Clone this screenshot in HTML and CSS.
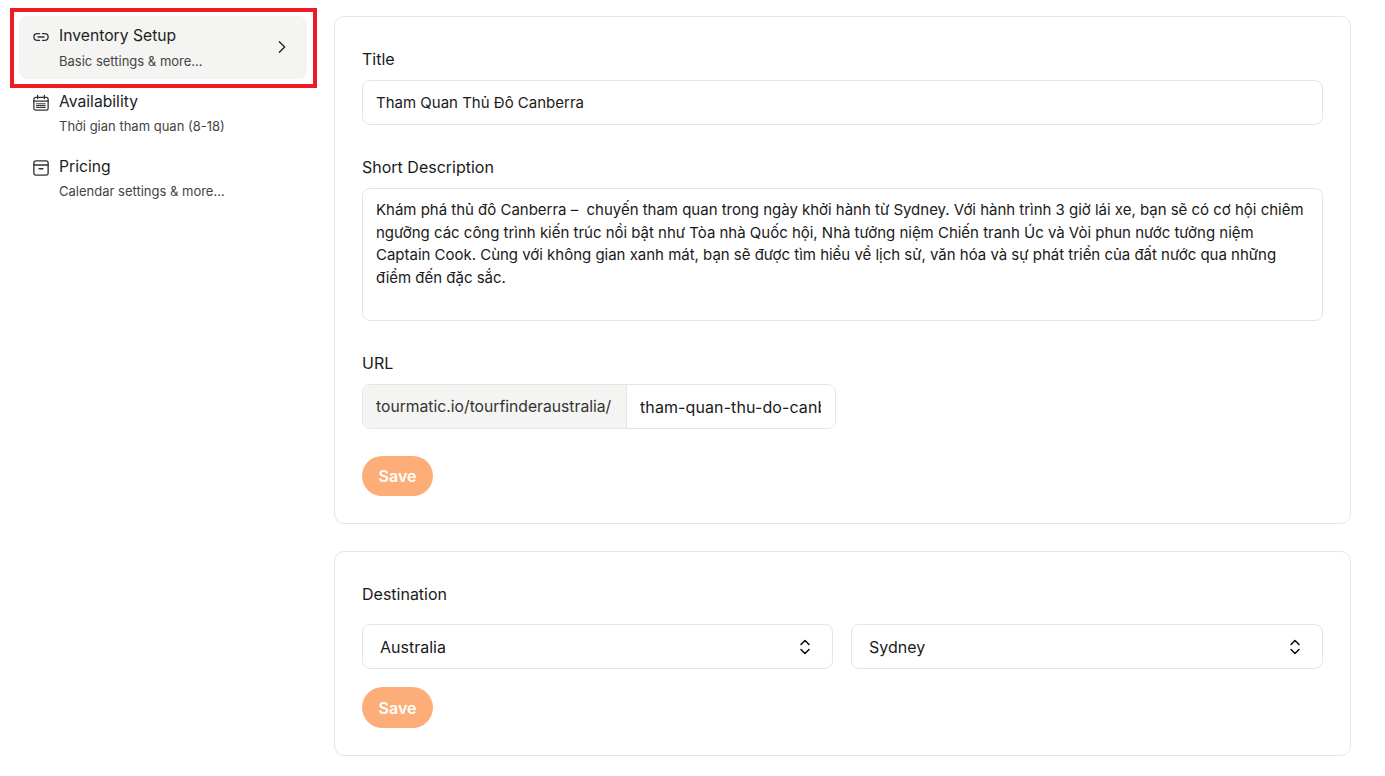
FILE: index.html
```html
<!DOCTYPE html>
<html lang="en">
<head>
    <meta charset="UTF-8">
    <meta name="viewport" content="width=device-width, initial-scale=1.0">
    <title>Inventory Setup</title>
    <link rel="stylesheet" href="styles.css">
</head>
<body>
    <div class="page">
        <!-- Sidebar -->
        <aside class="sidebar">
            <a href="#" class="side-item active">
                <svg class="side-icon" viewBox="0 0 24 24" fill="none" stroke="#333" stroke-width="1.8" stroke-linecap="round">
                    <path d="M10 7.5H7a4.5 4.5 0 0 0 0 9h3"/>
                    <path d="M14 7.5h3a4.5 4.5 0 0 1 0 9h-3"/>
                    <path d="M8 12h8"/>
                </svg>
                <div class="side-text">
                    <div class="side-title">Inventory Setup</div>
                    <div class="side-sub">Basic settings &amp; more...</div>
                </div>
                <svg class="side-arrow" viewBox="0 0 24 24" fill="none" stroke="#222" stroke-width="2" stroke-linecap="round" stroke-linejoin="round">
                    <path d="M8 4l8 8-8 8"/>
                </svg>
            </a>
            <a href="#" class="side-item">
                <svg class="side-icon" viewBox="0 0 24 24" fill="none" stroke="#333" stroke-width="1.7" stroke-linecap="round">
                    <rect x="2.5" y="4.5" width="19" height="17" rx="2.5"/>
                    <path d="M2.5 9.5h19"/>
                    <path d="M7.5 2v4M16.5 2v4"/>
                    <path d="M6 13h12M6 15.5h12M6 18h12" stroke-width="1.5" stroke-dasharray="1.5 1"/>
                </svg>
                <div class="side-text">
                    <div class="side-title">Availability</div>
                    <div class="side-sub">Thời gian tham quan (8-18)</div>
                </div>
            </a>
            <a href="#" class="side-item">
                <svg class="side-icon" viewBox="0 0 24 24" fill="none" stroke="#333" stroke-width="1.8" stroke-linecap="round" stroke-linejoin="round">
                    <path d="M5 2.5h14a2.5 2.5 0 0 1 2.5 2.5v14a2.5 2.5 0 0 1-2.5 2.5H5A2.5 2.5 0 0 1 2.5 19V5A2.5 2.5 0 0 1 5 2.5z"/>
                    <path d="M2.5 8h19"/>
                    <path d="M9.5 13h5"/>
                </svg>
                <div class="side-text">
                    <div class="side-title">Pricing</div>
                    <div class="side-sub">Calendar settings &amp; more...</div>
                </div>
            </a>
        </aside>

        <!-- Main forms -->
        <main class="content">
            <section class="card">
                <label class="field-label">Title</label>
                <input type="text" class="text-input" value="Tham Quan Thủ Đô Canberra">

                <label class="field-label label-gap">Short Description</label>
                <textarea class="text-area">Khám phá thủ đô Canberra –  chuyến tham quan trong ngày khởi hành từ Sydney. Với hành trình 3 giờ lái xe, bạn sẽ có cơ hội chiêm
ngưỡng các công trình kiến trúc nổi bật như Tòa nhà Quốc hội, Nhà tưởng niệm Chiến tranh Úc và Vòi phun nước tưởng niệm
Captain Cook. Cùng với không gian xanh mát, bạn sẽ được tìm hiểu về lịch sử, văn hóa và sự phát triển của đất nước qua những
điểm đến đặc sắc.</textarea>

                <label class="field-label label-gap">URL</label>
                <div class="url-group">
                    <span class="url-prefix">tourmatic.io/tourfinderaustralia/</span>
                    <input type="text" class="url-input" value="tham-quan-thu-do-canberra">
                </div>

                <button class="save-btn save-url">Save</button>
            </section>

            <section class="card card-dest">
                <label class="field-label dest-label">Destination</label>
                <div class="select-row">
                    <div class="select-box">
                        <select>
                            <option>Australia</option>
                        </select>
                        <svg class="select-icon" viewBox="0 0 12 16" fill="none" stroke="#111" stroke-width="1.6" stroke-linecap="round" stroke-linejoin="round">
                            <path d="M2 5.5L6 1.5l4 4"/>
                            <path d="M2 10.5l4 4 4-4"/>
                        </svg>
                    </div>
                    <div class="select-box">
                        <select>
                            <option>Sydney</option>
                        </select>
                        <svg class="select-icon" viewBox="0 0 12 16" fill="none" stroke="#111" stroke-width="1.6" stroke-linecap="round" stroke-linejoin="round">
                            <path d="M2 5.5L6 1.5l4 4"/>
                            <path d="M2 10.5l4 4 4-4"/>
                        </svg>
                    </div>
                </div>
                <button class="save-btn">Save</button>
            </section>
        </main>
    </div>

    <!-- Red annotation box from the screenshot -->
    <div class="highlight"></div>
</body>
</html>
```

FILE: styles.css
```css
/* Global Styles */
* {
    margin: 0;
    padding: 0;
    box-sizing: border-box;
    font-family: 'Inter', 'Noto Sans', sans-serif;
}

body {
    background-color: #fff;
    color: #1a1a1a;
    overflow: hidden;
}

a {
    text-decoration: none;
    color: inherit;
}

.page {
    display: flex;
    align-items: flex-start;
    padding: 16px 34px 0 19px;
    gap: 27px;
}

/* Sidebar */
.sidebar {
    width: 288px;
    flex-shrink: 0;
    display: flex;
    flex-direction: column;
    gap: 2px;
}

.side-item {
    display: flex;
    align-items: flex-start;
    height: 63px;
    padding: 12px 17px 0 13px;
    border-radius: 8px;
}

.side-item.active {
    padding-top: 11px;
    background-color: #f4f4f2;
}

.side-icon {
    width: 18px;
    height: 18px;
    margin-top: 1px;
    flex-shrink: 0;
}

.side-text {
    flex: 1;
    margin-left: 9px;
}

.side-title {
    font-size: 15.7px;
    line-height: 18px;
    color: #222;
}

.side-sub {
    font-size: 13px;
    line-height: 16px;
    margin-top: 7px;
    color: #444;
}

.active .side-sub {
    margin-top: 8px;
}

.side-arrow {
    width: 16px;
    height: 16px;
    margin-top: 12px;
}

/* Cards */
.content {
    flex: 1;
}

.card {
    border: 1px solid #e5e5e5;
    border-radius: 10px;
    padding: 32px 27px 27px;
    height: 508px;
}

.card-dest {
    margin-top: 27px;
    height: 205px;
}

.field-label {
    display: block;
    font-size: 16px;
    line-height: 20px;
    margin-bottom: 11px;
    color: #1a1a1a;
}

.label-gap {
    margin-top: 32px;
}

.dest-label {
    margin-bottom: 20px;
}

.text-input, .url-input, .text-area, select {
    font-size: 15px;
    color: #1a1a1a;
    background-color: #fff;
    outline: none;
}

.text-input {
    display: block;
    width: 100%;
    height: 45px;
    padding: 0 13px;
    border: 1px solid #e5e5e5;
    border-radius: 8px;
}

.text-area {
    display: block;
    width: 100%;
    height: 133px;
    padding: 10px 13px;
    line-height: 22.5px;
    letter-spacing: -0.015px;
    border: 1px solid #e5e5e5;
    border-radius: 8px;
    resize: none;
    overflow: hidden;
    white-space: pre;
}

/* URL field */
.url-group {
    display: flex;
    width: 474px;
    height: 45px;
    border: 1px solid #e5e5e5;
    border-radius: 8px;
    overflow: hidden;
}

.url-prefix {
    width: 264px;
    flex-shrink: 0;
    display: flex;
    align-items: center;
    padding-left: 13px;
    font-size: 15.7px;
    white-space: nowrap;
    color: #333;
    background-color: #f4f4f2;
    border-right: 1px solid #e5e5e5;
}

.url-input {
    flex: 1;
    min-width: 0;
    padding: 0 14px 0 13px;
    border: none;
    font-size: 16px;
    letter-spacing: 0.1px;
}

/* Destination selects */
.select-row {
    display: grid;
    grid-template-columns: 471px 472px;
    gap: 18px;
}

.select-box {
    position: relative;
}

select {
    display: block;
    width: 100%;
    height: 45px;
    padding: 0 17px;
    font-size: 16px;
    appearance: none;
    border: 1px solid #e5e5e5;
    border-radius: 8px;
}

.select-icon {
    position: absolute;
    top: 15px;
    right: 22px;
    width: 12px;
    height: 16px;
}

/* Buttons */
.save-btn {
    display: block;
    width: 71px;
    height: 41px;
    margin-top: 18px;
    border: none;
    border-radius: 21px;
    background-color: #fdae78;
    color: #fff;
    font-size: 16px;
    font-weight: 600;
    cursor: pointer;
}

.save-url {
    margin-top: 27px;
    height: 40px;
}

/* Annotation */
.highlight {
    position: absolute;
    top: 8px;
    left: 10px;
    width: 307px;
    height: 80px;
    border: 4px solid #ed1c24;
}
```
